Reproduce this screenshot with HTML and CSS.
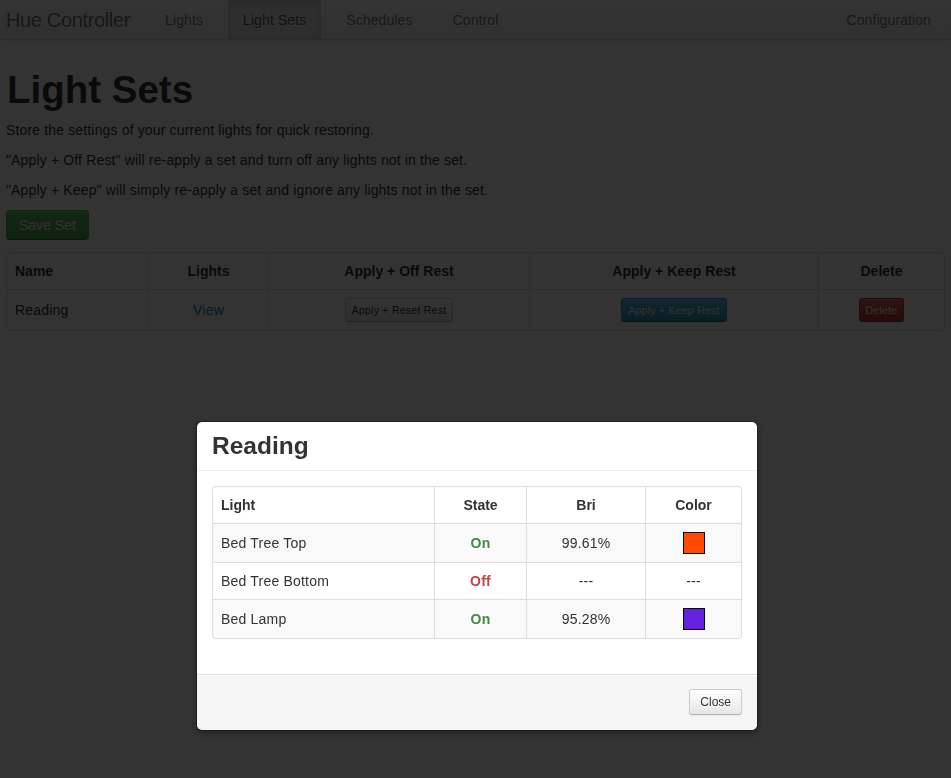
FILE: index.html
```html
<!DOCTYPE html>
<html>
<head>
<meta charset="utf-8">
<title>Hue Controller - Light Sets</title>
<link rel="stylesheet" href="styles.css">
</head>
<body>
<div class="navbar">
  <a class="brand" href="#">Hue Controller</a>
  <ul class="nav">
    <li><a href="#">Lights</a></li>
    <li class="active"><a href="#">Light Sets</a></li>
    <li><a href="#">Schedules</a></li>
    <li><a href="#">Control</a></li>
  </ul>
  <ul class="nav nav-right">
    <li><a href="#">Configuration</a></li>
  </ul>
</div>

<div class="page">
  <h1>Light Sets</h1>
  <p>Store the settings of your current lights for quick restoring.</p>
  <p>"Apply + Off Rest" will re-apply a set and turn off any lights not in the set.</p>
  <p>"Apply + Keep" will simply re-apply a set and ignore any lights not in the set.</p>
  <div class="actions"><button class="btn btn-success">Save Set</button></div>

  <table class="table table-bordered sets">
    <thead>
      <tr>
        <th class="c-name">Name</th>
        <th class="c-lights center">Lights</th>
        <th class="c-off center">Apply + Off Rest</th>
        <th class="c-keep center">Apply + Keep Rest</th>
        <th class="center">Delete</th>
      </tr>
    </thead>
    <tbody>
      <tr>
        <td class="first-bl">Reading</td>
        <td class="center"><a class="link" href="#">View</a></td>
        <td class="center"><button class="btn btn-mini">Apply + Reset Rest</button></td>
        <td class="center"><button class="btn btn-mini btn-info">Apply + Keep Rest</button></td>
        <td class="center last-br"><button class="btn btn-mini btn-danger">Delete</button></td>
      </tr>
    </tbody>
  </table>
</div>

<div class="backdrop"></div>

<div class="modal">
  <div class="modal-header"><h3>Reading</h3></div>
  <div class="modal-body">
    <table class="table table-bordered table-striped detail">
      <thead>
        <tr>
          <th class="d-light">Light</th>
          <th class="d-state center">State</th>
          <th class="d-bri center">Bri</th>
          <th class="center">Color</th>
        </tr>
      </thead>
      <tbody>
        <tr>
          <td>Bed Tree Top</td>
          <td class="center on">On</td>
          <td class="center">99.61%</td>
          <td class="center"><span class="swatch swatch-orange"></span></td>
        </tr>
        <tr>
          <td>Bed Tree Bottom</td>
          <td class="center off">Off</td>
          <td class="center">---</td>
          <td class="center">---</td>
        </tr>
        <tr>
          <td class="first-bl">Bed Lamp</td>
          <td class="center on">On</td>
          <td class="center">95.28%</td>
          <td class="center last-br"><span class="swatch swatch-purple"></span></td>
        </tr>
      </tbody>
    </table>
  </div>
  <div class="modal-footer"><button class="btn btn-small">Close</button></div>
</div>
</body>
</html>
```

FILE: styles.css
```css
* { box-sizing: border-box; }

html, body {
  margin: 0;
  padding: 0;
  height: 100%;
}

body {
  font-family: "Liberation Sans", Arial, Helvetica, sans-serif;
  font-size: 14px;
  line-height: 20px;
  color: #333333;
  background: #ffffff;
}

/* Navbar */
.navbar {
  display: flex;
  align-items: stretch;
  height: 40px;
  padding: 0 5px 0 6px;
  background: linear-gradient(to bottom, #ffffff, #f2f2f2);
  border-bottom: 1px solid #d4d4d4;
  box-shadow: 0 1px 4px rgba(0, 0, 0, 0.065);
}

.brand {
  display: block;
  padding: 10px 20px 9px 0;
  font-size: 20px;
  line-height: 20px;
  font-weight: 200;
  letter-spacing: -0.35px;
  color: #777777;
  text-decoration: none;
  text-shadow: 0 1px 0 #ffffff;
}

.nav {
  display: flex;
  gap: 10px;
  list-style: none;
  margin: 0;
  padding: 0;
}

.nav-right { margin-left: auto; }

.nav li a {
  display: block;
  height: 39px;
  padding: 10px 15px 9px;
  color: #777777;
  letter-spacing: 0.1px;
  text-decoration: none;
  text-shadow: 0 1px 0 #ffffff;
}

.nav li.active a {
  background: #e5e5e5;
  color: #555555;
  box-shadow: inset 0 3px 8px rgba(0, 0, 0, 0.125);
}

/* Page */
.page {
  padding: 20px 6px 0;
}

h1 {
  margin: 10px 0 10px 1px;
  font-size: 38.5px;
  line-height: 40px;
  font-weight: bold;
  color: #333333;
}

p {
  margin: 0 0 10px;
  letter-spacing: 0.15px;
}

.actions { margin-bottom: 12px; }

/* Buttons */
.btn {
  display: inline-block;
  padding: 4px 12px;
  font-family: inherit;
  font-size: 14px;
  line-height: 20px;
  color: #333333;
  text-align: center;
  text-shadow: 0 1px 1px rgba(255, 255, 255, 0.75);
  vertical-align: middle;
  background: linear-gradient(to bottom, #ffffff, #e6e6e6);
  border: 1px solid #cccccc;
  border-bottom-color: #b3b3b3;
  border-radius: 4px;
  box-shadow: inset 0 1px 0 rgba(255, 255, 255, 0.2), 0 1px 2px rgba(0, 0, 0, 0.05);
  cursor: pointer;
}

.btn-success {
  color: #ffffff;
  text-shadow: 0 -1px 0 rgba(0, 0, 0, 0.25);
  background: linear-gradient(to bottom, #62c462, #51a351);
  border-color: #51a351 #51a351 #387038;
}

.btn-info {
  color: #ffffff;
  text-shadow: 0 -1px 0 rgba(0, 0, 0, 0.25);
  background: linear-gradient(to bottom, #5bc0de, #2f96b4);
  border-color: #2f96b4 #2f96b4 #1f6377;
}

.btn-danger {
  color: #ffffff;
  text-shadow: 0 -1px 0 rgba(0, 0, 0, 0.25);
  background: linear-gradient(to bottom, #ee5f5b, #bd362f);
  border-color: #bd362f #bd362f #802420;
}

.btn-mini {
  padding: 1px 6px;
  font-size: 10.5px;
  letter-spacing: 0.25px;
  border-radius: 3px;
}

.btn-small {
  padding: 2px 10px;
  font-size: 12px;
  border-radius: 3px;
}

/* Tables */
.table {
  width: 100%;
  border-spacing: 0;
  border-collapse: separate;
  margin-bottom: 20px;
}

.table th,
.table td {
  padding: 8px;
  line-height: 20px;
  text-align: left;
  vertical-align: top;
  border-top: 1px solid #dddddd;
}

.table td { letter-spacing: 0.2px; }

.table th { font-weight: bold; vertical-align: bottom; }

.table thead tr:first-child th { border-top: 0; }

.table-bordered {
  border: 1px solid #dddddd;
  border-left: 0;
  border-radius: 4px;
}

.table-bordered th,
.table-bordered td { border-left: 1px solid #dddddd; }

.table-bordered thead tr:first-child th:first-child { border-top-left-radius: 4px; }
.table-bordered thead tr:first-child th:last-child { border-top-right-radius: 4px; }
.table-bordered .first-bl { border-bottom-left-radius: 4px; }
.table-bordered .last-br { border-bottom-right-radius: 4px; }

.table-striped tbody tr:nth-child(odd) td { background-color: #f9f9f9; }

.table .center { text-align: center; }

.sets td { vertical-align: middle; }
.c-name { width: 142px; }
.c-lights { width: 120px; }
.c-off { width: 261px; }
.c-keep { width: 289px; }

.link { color: #0088cc; text-decoration: none; }

/* Backdrop & modal */
.backdrop {
  position: fixed;
  top: 0;
  right: 0;
  bottom: 0;
  left: 0;
  background: #000000;
  opacity: 0.8;
}

.modal {
  position: fixed;
  top: 421px;
  left: 196px;
  width: 562px;
  background: #ffffff;
  border: 1px solid rgba(0, 0, 0, 0.3);
  border-radius: 6px;
  box-shadow: 0 3px 7px rgba(0, 0, 0, 0.3);
  background-clip: padding-box;
}

.modal-header {
  padding: 9px 15px;
  border-bottom: 1px solid #eeeeee;
}

.modal-header h3 {
  margin: 0;
  font-size: 24.5px;
  line-height: 30px;
  font-weight: bold;
}

.modal-body {
  padding: 15px;
}

.detail td { vertical-align: middle; }
.d-light { width: 222px; }
.d-state { width: 92px; }
.d-bri { width: 119px; }

.on { color: #468847; font-weight: bold; }
.off { color: #b94a48; font-weight: bold; }

.swatch {
  display: block;
  width: 22px;
  height: 22px;
  margin: 0 auto;
  border: 1px solid #000000;
}

.swatch-orange { background: #ff4a00; }
.swatch-purple { background: #6620e0; }

.modal-footer {
  padding: 14px 15px 15px;
  text-align: right;
  background: #f5f5f5;
  border-top: 1px solid #dddddd;
  border-radius: 0 0 6px 6px;
  box-shadow: inset 0 1px 0 #ffffff;
}
```
